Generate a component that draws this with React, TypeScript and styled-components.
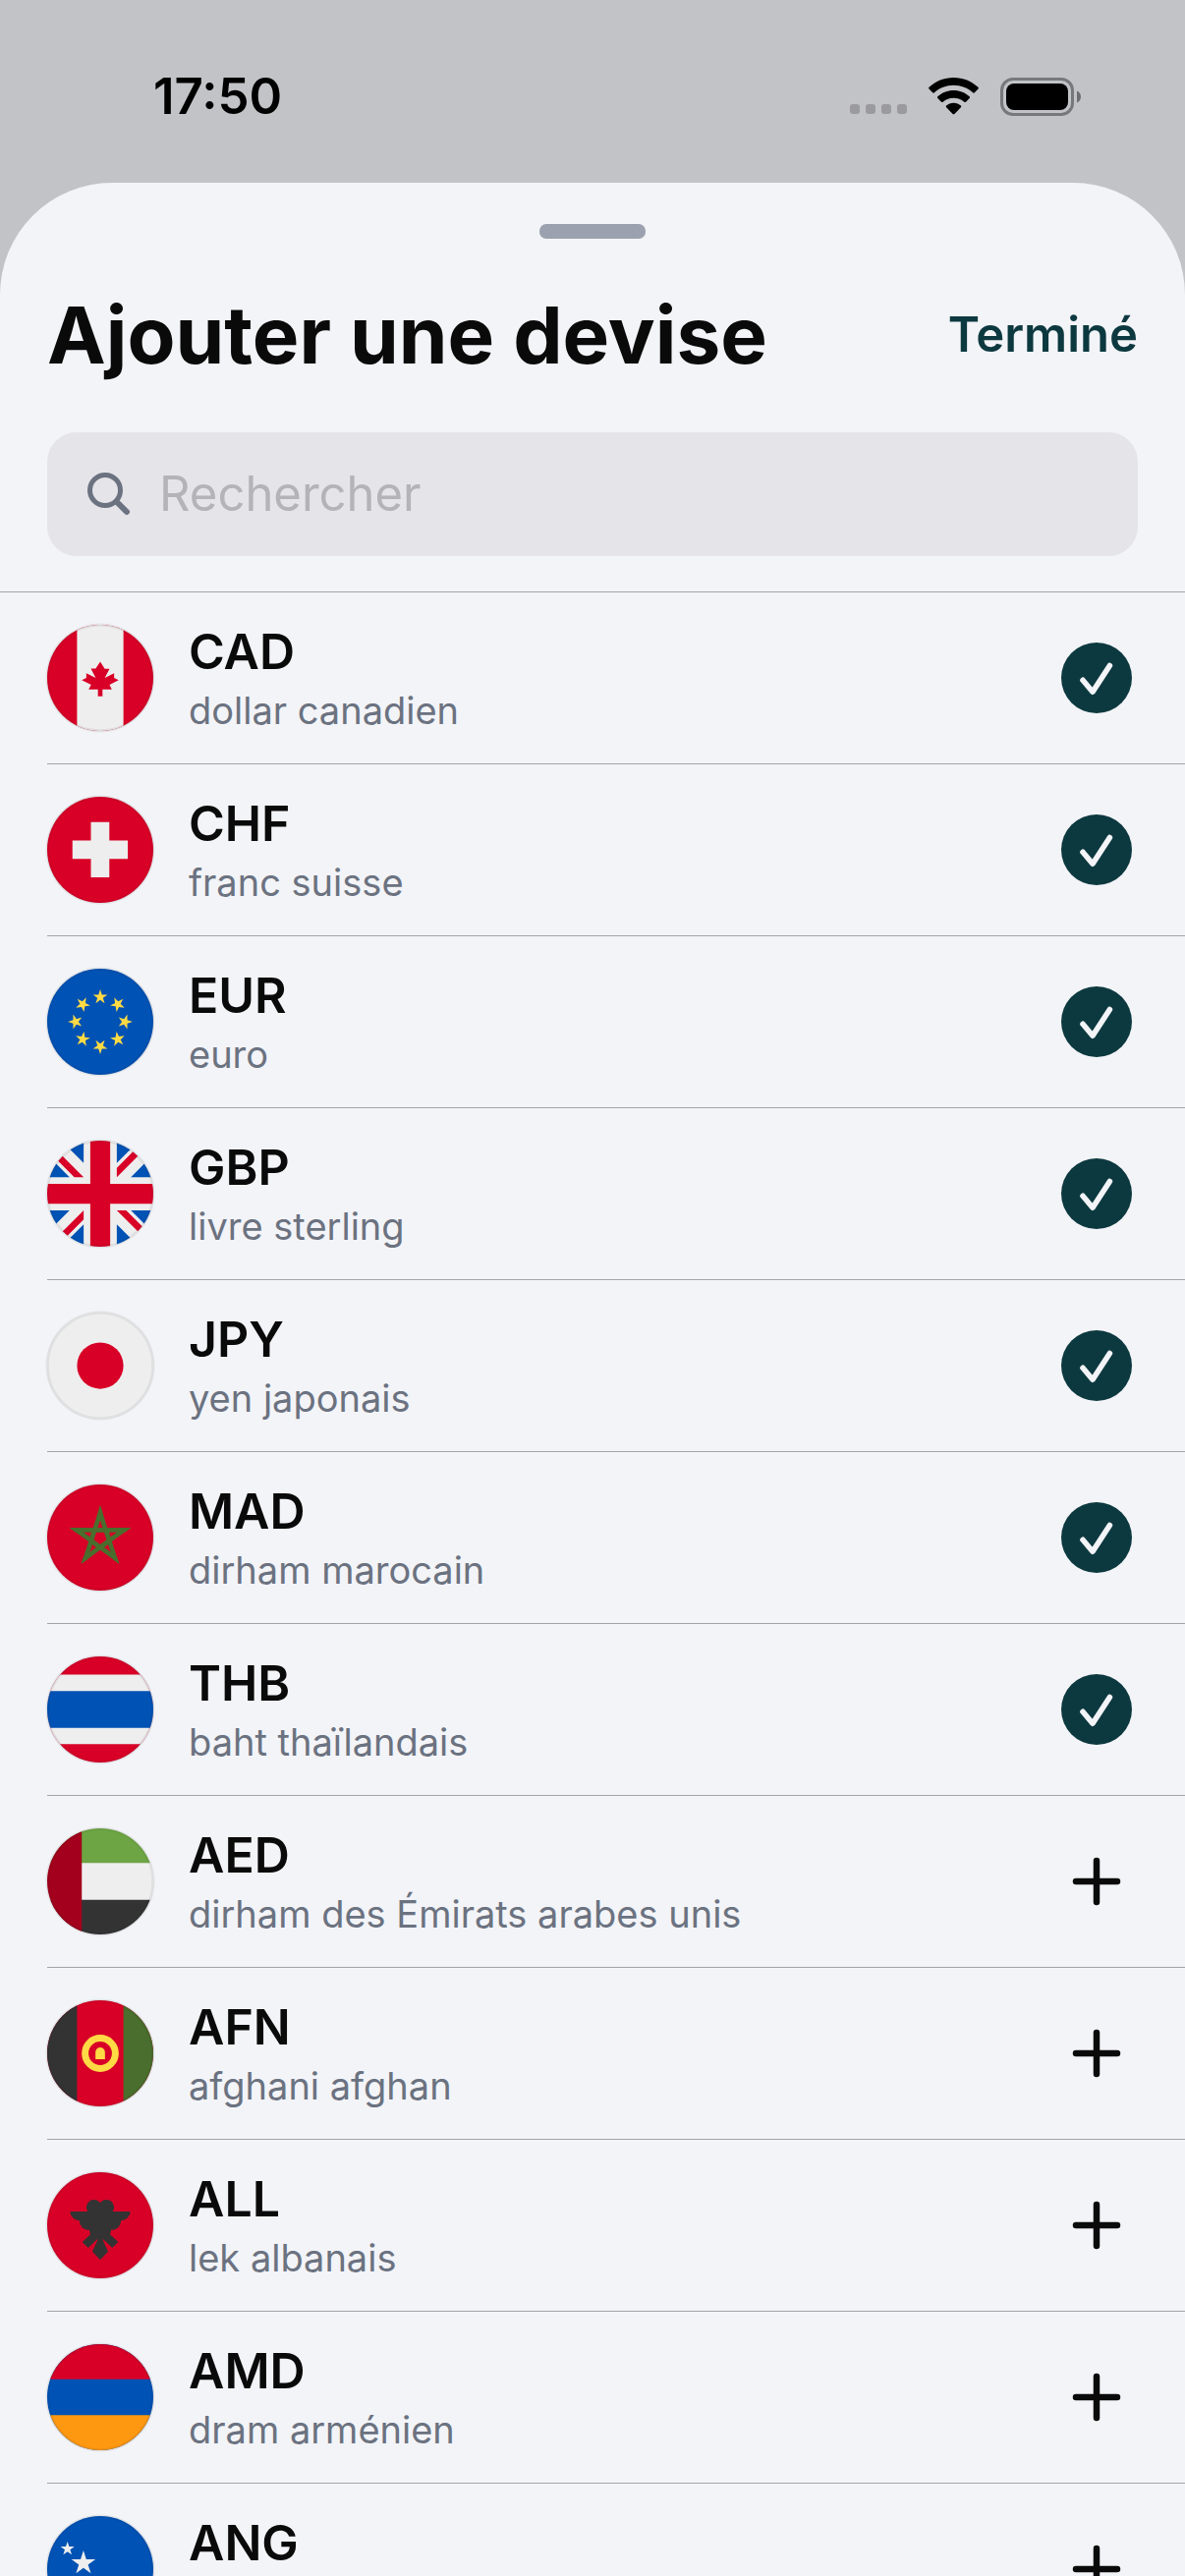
import * as React from 'react';
import styled, { createGlobalStyle, css } from 'styled-components';

interface Currency {
  code: string;
  name: string;
  flag: React.ReactNode;
}

const colors = {
  backdrop: '#c2c3c7',
  sheet: '#f3f4f8',
  text: '#0a0a0a',
  muted: '#6b7280',
  accent: '#0c393f',
  field: '#e5e4e9',
  placeholder: '#b3b3b8',
  line: '#a1a4a9',
  grabber: '#9ba1ae',
};

const flagColors = {
  white: '#eee',
  red: '#d80027',
  darkRed: '#a2001d',
  blue: '#0052b4',
  yellow: '#ffda44',
  orange: '#ff9811',
  green: '#6da544',
  darkGreen: '#496e2d',
  black: '#333',
};

const GlobalStyle = createGlobalStyle`
  *, *::before, *::after {
    box-sizing: border-box;
  }
  body {
    margin: 0;
    background: ${colors.backdrop};
    color: ${colors.text};
    font-family: Inter, Roboto, "Liberation Sans", sans-serif;
  }
  button, input {
    font: inherit;
    color: inherit;
  }
`;

const Screen = styled.div`
  display: flex;
  flex-direction: column;
  height: 100vh;
  overflow: hidden;
`;

const StatusBar = styled.header`
  display: flex;
  flex: none;
  align-items: center;
  justify-content: space-between;
  height: 186px;
  padding: 10px 105px 0 156px;
  color: #000;
`;

const Clock = styled.time`
  font-size: 51px;
  line-height: 60px;
  font-weight: 600;
`;

const StatusIcons = styled.div`
  display: flex;
  align-items: center;
  gap: 22px;
  svg {
    display: block;
  }
`;

const Sheet = styled.main`
  display: flex;
  flex: 1;
  flex-direction: column;
  min-height: 0;
  overflow: hidden;
  background: ${colors.sheet};
  border-radius: 114px 114px 0 0;
`;

const Grabber = styled.div`
  flex: none;
  width: 108px;
  height: 15px;
  margin: 42px auto 0;
  border-radius: 7px;
  background: ${colors.grabber};
`;

const TitleBar = styled.div`
  display: flex;
  flex: none;
  align-items: center;
  justify-content: space-between;
  padding: 48px 48px 0;
`;

const Title = styled.h1`
  margin: 0;
  font-size: 80px;
  line-height: 100px;
  font-weight: 700;
`;

const DoneButton = styled.button`
  padding: 0;
  border: 0;
  background: none;
  color: ${colors.accent};
  font-size: 49px;
  line-height: 60px;
  font-weight: 600;
  cursor: pointer;
`;

const SearchField = styled.label`
  display: flex;
  flex: none;
  align-items: center;
  gap: 27px;
  height: 126px;
  margin: 49px 48px 36px;
  padding: 0 39px;
  border-radius: 30px;
  background: ${colors.field};
  svg {
    flex: none;
  }
`;

const SearchInput = styled.input`
  flex: 1;
  min-width: 0;
  padding: 0;
  border: 0;
  outline: 0;
  background: none;
  font-size: 49px;
  line-height: 60px;
  &::placeholder {
    color: ${colors.placeholder};
    opacity: 1;
  }
`;

const List = styled.ul`
  flex: 1;
  min-height: 0;
  margin: 0;
  padding: 0;
  overflow-y: auto;
  scrollbar-width: none;
  list-style: none;
  border-top: 1px solid ${colors.line};
`;

const Row = styled.li`
  display: flex;
  align-items: center;
  gap: 36px;
  height: 175px;
  margin-left: 48px;
  padding-right: 54px;
  border-bottom: 1px solid ${colors.line};
`;

const FlagIcon = styled.svg`
  flex: none;
  width: 108px;
  height: 108px;
  overflow: visible;
`;

const Labels = styled.div`
  display: flex;
  flex: 1;
  flex-direction: column;
  gap: 6px;
  min-width: 0;
`;

const Code = styled.span`
  font-size: 50px;
  line-height: 60px;
  font-weight: 600;
`;

const Name = styled.span`
  color: ${colors.muted};
  font-size: 38px;
  line-height: 48px;
`;

const ToggleButton = styled.button<{ $selected: boolean }>`
  display: flex;
  flex: none;
  align-items: center;
  justify-content: center;
  width: 72px;
  height: 72px;
  padding: 0;
  border: 0;
  border-radius: 50%;
  background: none;
  cursor: pointer;
  ${(props) => props.$selected && css`
    background: ${colors.accent};
    color: ${colors.sheet};
  `}
`;

// Tip of the star points up
function starPoints(cx: number, cy: number, radius: number, innerRatio = 0.382) {
  const points = [];
  for (let i = 0; i < 10; i++) {
    const r = i % 2 ? radius * innerRatio : radius;
    const a = (i * Math.PI) / 5;
    points.push(`${(cx + r * Math.sin(a)).toFixed(1)},${(cy - r * Math.cos(a)).toFixed(1)}`);
  }
  return points.join(' ');
}

function Flag({ id, children }: { id: string; children: React.ReactNode }) {
  return <FlagIcon viewBox="0 0 512 512" aria-hidden="true">
    <clipPath id={`clip-${id}`}>
      <circle cx="256" cy="256" r="256"/>
    </clipPath>
    <circle cx="256" cy="256" r="263" fill="#000" fillOpacity="0.07"/>
    <g clipPath={`url(#clip-${id})`}>{children}</g>
    <circle cx="256" cy="256" r="252" fill="none" stroke="#000" strokeOpacity="0.06" strokeWidth="9"/>
  </FlagIcon>;
}

const currencies: Currency[] = [
  {
    code: 'CAD',
    name: 'dollar canadien',
    flag: <>
      <path fill={flagColors.red} d="M0 0h512v512H0z"/>
      <path fill={flagColors.white} d="M144 0h224v512H144z"/>
      <path fill={flagColors.red} d="m301 289 44-22-22-11v-22l-45 22 23-44h-23l-22-34-22 33h-23l23 45-45-22v22l-22 11 45 22-12 23h45v33h22v-33h45z"/>
    </>,
  },
  {
    code: 'CHF',
    name: 'franc suisse',
    flag: <>
      <path fill={flagColors.red} d="M0 0h512v512H0z"/>
      <path fill={flagColors.white} d="M389 211h-89v-89h-89v89h-89v89h89v89h89v-89h89z"/>
    </>,
  },
  {
    code: 'EUR',
    name: 'euro',
    flag: <>
      <path fill={flagColors.blue} d="M0 0h512v512H0z"/>
      {[0, 45, 90, 135, 180, 225, 270, 315].map((angle) =>
        <path
          key={angle}
          fill={flagColors.yellow}
          transform={`rotate(${angle} 256 256)`}
          d="m256 100 8.3 25.5H291l-21.7 15.8 8.3 25.500-21.600-15.800-21.700 15.800 8.300-25.500L221 125.500h26.700z"
        />)}
    </>,
  },
  {
    code: 'GBP',
    name: 'livre sterling',
    flag: <>
      <path fill={flagColors.white} d="M0 0h512v512H0z"/>
      <path fill={flagColors.blue} d="M336 0v108L444 0Zm176 68L404 176h108zM0 176h108L0 68ZM68 0l108 108V0Zm108 512V404L68 512ZM0 444l108-108H0Zm512-108H404l108 108Zm-68 176L336 404v108z"/>
      <path fill={flagColors.red} d="M0 0v45l131 131h45L0 0zm208 0v208H0v96h208v208h96V304h208v-96H304V0h-96zm259 0L336 131v45L512 0h-45zM176 336 0 512h45l131-131v-45zm160 0 176 176v-45L381 336h-45z"/>
    </>,
  },
  {
    code: 'JPY',
    name: 'yen japonais',
    flag: <>
      <path fill={flagColors.white} d="M0 0h512v512H0z"/>
      <circle fill={flagColors.red} cx="256" cy="256" r="112"/>
    </>,
  },
  {
    code: 'MAD',
    name: 'dirham marocain',
    flag: <>
      <path fill={flagColors.red} d="M0 0h512v512H0z"/>
      <clipPath id="pentagram">
        <polygon points={starPoints(256, 257, 157)}/>
      </clipPath>
      <g clipPath="url(#pentagram)" fill={flagColors.darkGreen}>
        {[0, 72, 144, 216, 288].map((angle) =>
          <path key={angle} transform={`rotate(${angle} 256 257)`} d="M106 208h300v23H106z"/>)}
      </g>
    </>,
  },
  {
    code: 'THB',
    name: 'baht thaïlandais',
    flag: <>
      <path fill={flagColors.red} d="M0 0h512v512H0z"/>
      <path fill={flagColors.white} d="M0 88h512v335H0z"/>
      <path fill={flagColors.blue} d="M0 167h512v178H0z"/>
    </>,
  },
  {
    code: 'AED',
    name: 'dirham des Émirats arabes unis',
    flag: <>
      <path fill={flagColors.white} d="M0 0h512v512H0z"/>
      <path fill={flagColors.green} d="M0 0h512v167H0z"/>
      <path fill={flagColors.black} d="M0 345h512v167H0z"/>
      <path fill={flagColors.darkRed} d="M0 0h167v512H0z"/>
    </>,
  },
  {
    code: 'AFN',
    name: 'afghani afghan',
    flag: <>
      <path fill={flagColors.red} d="M0 0h512v512H0z"/>
      <path fill={flagColors.black} d="M0 0h144v512H0z"/>
      <path fill={flagColors.darkGreen} d="M368 0h144v512H368z"/>
      <circle cx="256" cy="256" r="73" fill="none" stroke={flagColors.yellow} strokeWidth="33"/>
      <path fill={flagColors.yellow} d="M233 284v-33a23 23 0 0 1 46 0v33z"/>
    </>,
  },
  {
    code: 'ALL',
    name: 'lek albanais',
    flag: <>
      <path fill={flagColors.red} d="M0 0h512v512H0z"/>
      <path fill={flagColors.black} d="M401 190h-85a33 33 0 0 0-60-42 33 33 0 0 0-60 42h-85c0 23 20 43 45 43 0 26 20 46 48 46 0 8 2 14 5 21l-40 37 29 28 42-40c1-1 3-2 5-2l-27 60 38 40 38-40-27-60c2 0 4 1 5 2l42 40 29-28-40-37c3-7 5-13 5-21 28 0 48-20 48-46 25 0 45-20 45-43z"/>
    </>,
  },
  {
    code: 'AMD',
    name: 'dram arménien',
    flag: <>
      <path fill={flagColors.blue} d="M0 0h512v512H0z"/>
      <path fill={flagColors.red} d="M0 0h512v170H0z"/>
      <path fill={flagColors.orange} d="M0 342h512v170H0z"/>
    </>,
  },
  {
    code: 'ANG',
    name: 'florin antillais',
    flag: <>
      <path fill={flagColors.blue} d="M0 0h512v512H0z"/>
      <path fill={flagColors.yellow} d="M0 322h512v68H0z"/>
      <polygon fill={flagColors.white} points={starPoints(98, 158, 35)}/>
      <polygon fill={flagColors.white} points={starPoints(175, 227, 61)}/>
    </>,
  },
];

function CellularDots() {
  return <svg width="58" height="38" viewBox="0 0 58 38" fill="#9b9b9e" aria-hidden="true">
    {[0, 16, 32, 48].map((x) => <rect key={x} x={x} y="27" width="10" height="10" rx="3"/>)}
  </svg>;
}

function WifiIcon() {
  return <svg width="51" height="38" viewBox="0 0 51 38" aria-hidden="true">
    <path d="M25.500 0C35.200 0 44 3.700 50.500 9.800c.5.500.5 1.200 0 1.700l-3.700 3.800c-.5.500-1.200.500-1.700 0C39.900 10.600 33.100 7.800 25.500 7.800S11.100 10.600 5.900 15.300c-.5.500-1.200.500-1.700 0L.5 11.500c-.5-.5-.5-1.200 0-1.700C7 3.700 15.800 0 25.500 0z"/>
    <path d="M25.500 13c6.300 0 12 2.400 16.200 6.300.5.500.5 1.200 0 1.700L38 24.700c-.5.500-1.200.500-1.700 0-2.900-2.500-6.700-4-10.800-4s-7.900 1.500-10.800 4c-.5.500-1.200.500-1.700 0L9.300 21c-.5-.5-.5-1.200 0-1.700C13.500 15.400 19.200 13 25.500 13z"/>
    <path d="M25.500 25.800c2.900 0 5.500 1.100 7.400 2.800.5.500.5 1.200 0 1.700l-6.500 6.600c-.5.500-1.300.500-1.800 0l-6.500-6.600c-.5-.5-.5-1.200 0-1.700 1.900-1.700 4.500-2.800 7.400-2.800z"/>
  </svg>;
}

function BatteryIcon() {
  return <svg width="83" height="39" viewBox="0 0 83 39" aria-hidden="true">
    <rect x="1.5" y="1.5" width="72" height="36" rx="11.5" fill="none" stroke="#77787a" strokeWidth="3"/>
    <rect x="6" y="6" width="63" height="27" rx="8"/>
    <path fill="#6d6e70" d="M78 13.500c2.400 1 4 3.300 4 6s-1.600 5-4 6z"/>
  </svg>;
}

function SearchIcon() {
  return <svg width="48" height="48" viewBox="0 0 48 48" fill="none" stroke={colors.muted} strokeLinecap="round" aria-hidden="true">
    <circle cx="20" cy="20" r="15.5" strokeWidth="5"/>
    <path d="M31.500 31.500 42 42" strokeWidth="6"/>
  </svg>;
}

function CheckIcon() {
  return <svg width="72" height="72" viewBox="0 0 72 72" fill="none" stroke="currentColor" strokeWidth="5.6" strokeLinecap="round" strokeLinejoin="round" aria-hidden="true">
    <path d="M22 38.300 32 50.200 49.400 23.500"/>
  </svg>;
}

function PlusIcon() {
  return <svg width="50" height="50" viewBox="0 0 50 50" fill="none" stroke="currentColor" strokeWidth="6.5" strokeLinecap="round" aria-hidden="true">
    <path d="M25 4v42M4 25h42"/>
  </svg>;
}

export default function App() {
  const [query, setQuery] = React.useState('');
  const [selected, setSelected] = React.useState(['CAD', 'CHF', 'EUR', 'GBP', 'JPY', 'MAD', 'THB']);

  const toggle = (code: string) => {
    setSelected((codes) => codes.includes(code) ? codes.filter((c) => c !== code) : [...codes, code]);
  };

  const visible = currencies.filter(({ code, name }) =>
    `${code} ${name}`.toLowerCase().includes(query.toLowerCase()));

  return <Screen>
    <GlobalStyle/>
    <StatusBar>
      <Clock>17:50</Clock>
      <StatusIcons>
        <CellularDots/>
        <WifiIcon/>
        <BatteryIcon/>
      </StatusIcons>
    </StatusBar>
    <Sheet>
      <Grabber/>
      <TitleBar>
        <Title>Ajouter une devise</Title>
        <DoneButton type="button">Terminé</DoneButton>
      </TitleBar>
      <SearchField>
        <SearchIcon/>
        <SearchInput
          type="text"
          aria-label="Rechercher"
          placeholder="Rechercher"
          value={query}
          onChange={(e) => setQuery(e.target.value)}
        />
      </SearchField>
      <List>
        {visible.map(({ code, name, flag }) => {
          const isSelected = selected.includes(code);
          return <Row key={code}>
            <Flag id={code}>{flag}</Flag>
            <Labels>
              <Code>{code}</Code>
              <Name>{name}</Name>
            </Labels>
            <ToggleButton
              type="button"
              $selected={isSelected}
              aria-pressed={isSelected}
              aria-label={`${isSelected ? 'Retirer' : 'Ajouter'} ${code}`}
              onClick={() => toggle(code)}
            >
              {isSelected ? <CheckIcon/> : <PlusIcon/>}
            </ToggleButton>
          </Row>;
        })}
      </List>
    </Sheet>
  </Screen>;
}
